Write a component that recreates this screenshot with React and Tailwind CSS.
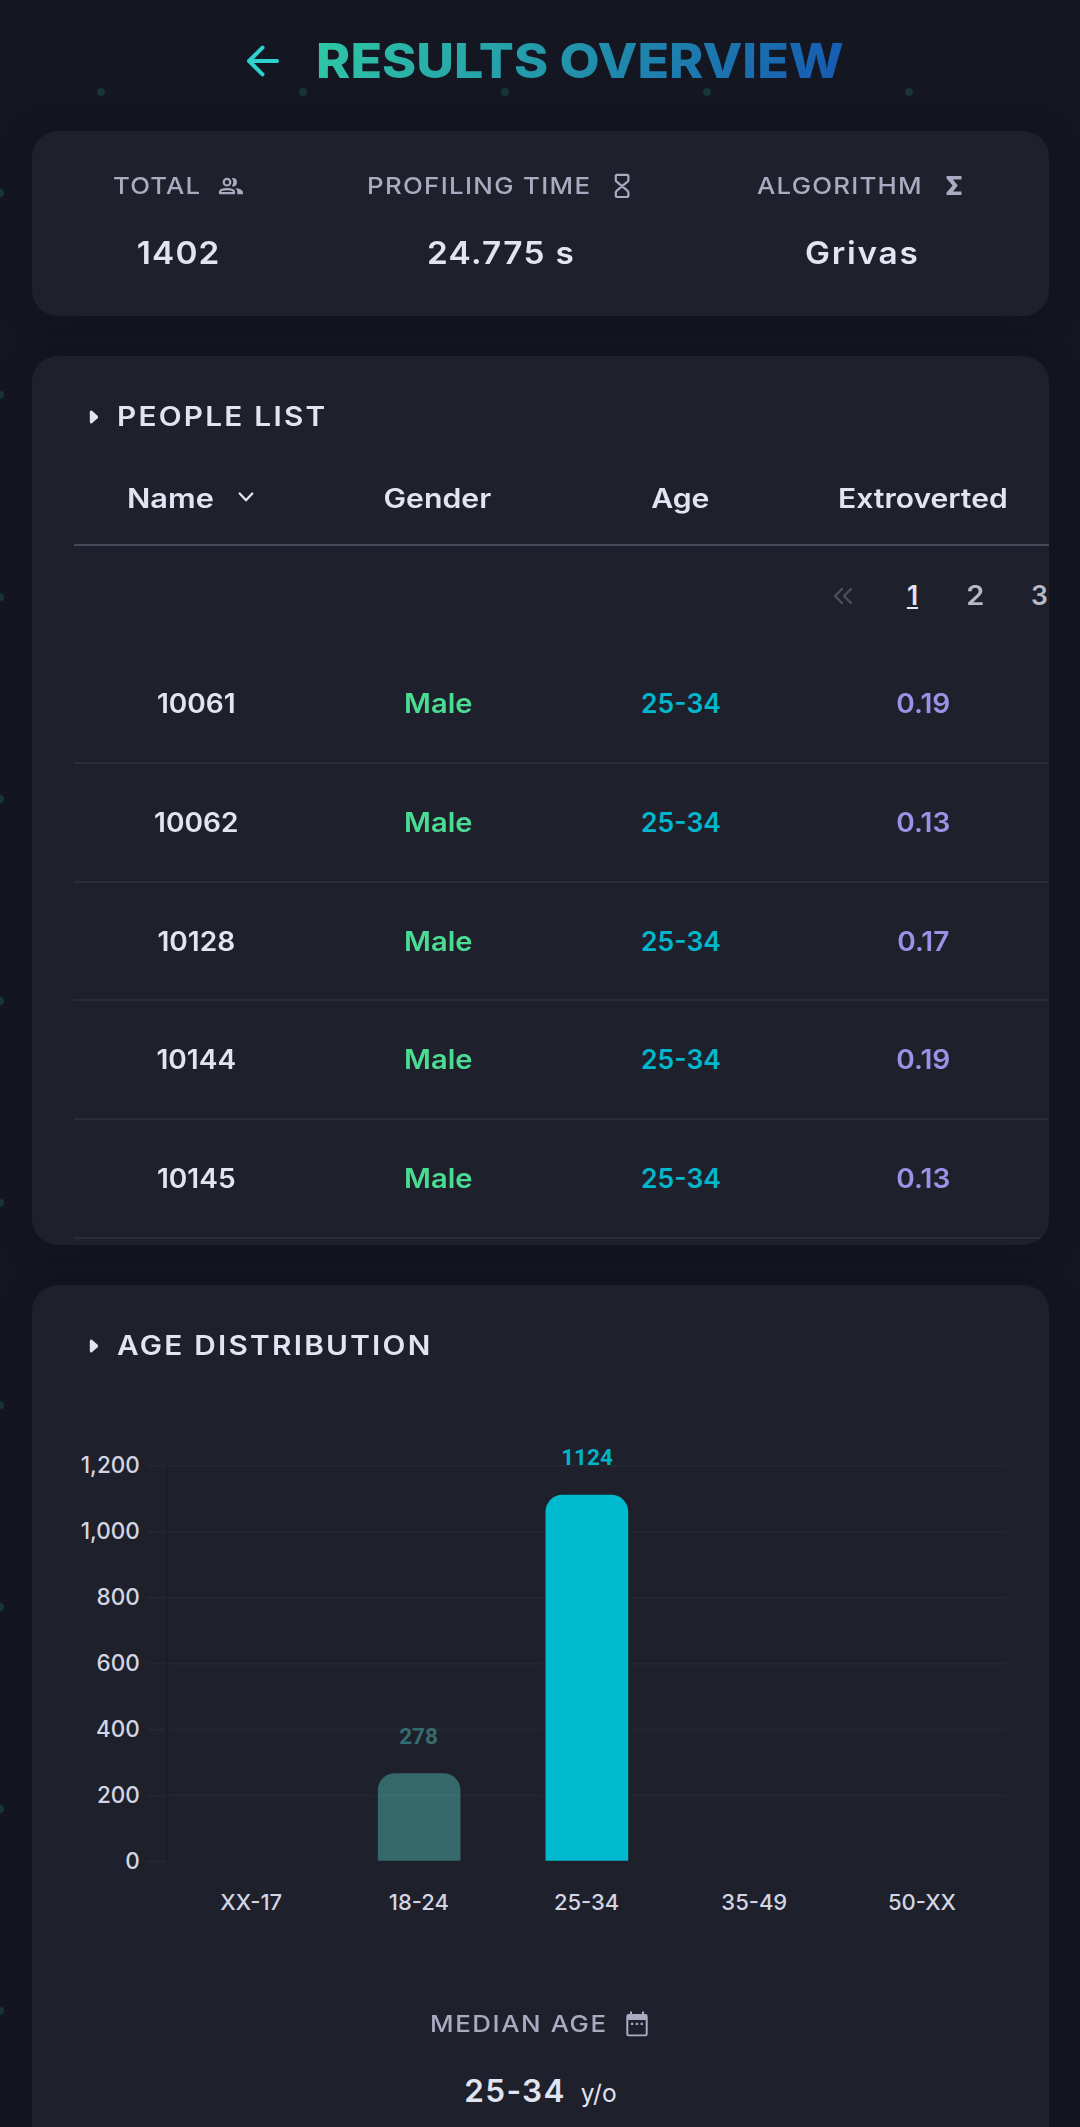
import React from "react";

const people = [
  { name: "10061", gender: "Male", age: "25-34", extroverted: "0.19" },
  { name: "10062", gender: "Male", age: "25-34", extroverted: "0.13" },
  { name: "10128", gender: "Male", age: "25-34", extroverted: "0.17" },
  { name: "10144", gender: "Male", age: "25-34", extroverted: "0.19" },
  { name: "10145", gender: "Male", age: "25-34", extroverted: "0.13" },
];

const yTicks = ["0", "200", "400", "600", "800", "1,000", "1,200"];
const xTicks = ["XX-17", "18-24", "25-34", "35-49", "50-XX"];

function ArrowLeft() {
  return (
    <svg className="h-[34px] w-[36px]" viewBox="0 0 36 34" fill="none" stroke="#2dd2d0" strokeWidth="4" strokeLinecap="round" strokeLinejoin="round">
      <path d="M32 17H4M17.5 3.7 4 17l13.500 13.300" />
    </svg>
  );
}

function People() {
  return (
    <svg className="h-[26px] w-[26px]" viewBox="0 0 26 26" fill="currentColor">
      <circle cx="9" cy="9.200" r="3.300" fill="none" stroke="currentColor" strokeWidth="2.200" />
      <path d="M2 20.200V18.800Q2.400 16.200 9 16.200T16 18.800V20.200Z" fill="none" stroke="currentColor" strokeWidth="2.200" strokeLinejoin="round" />
      <path d="M13.800 5.100Q18.800 4.400 19 9.200 18.800 14 13.800 13.300 16.800 9.200 13.800 5.100Z" />
      <path d="M18.300 15.200Q24.600 16.200 24.900 18.900V21.300H19.300V18.900Q19.300 16.600 17.300 15.200Z" />
    </svg>
  );
}

function Hourglass() {
  return (
    <svg className="h-[26px] w-[16px]" viewBox="0 0 16 26" fill="none" stroke="currentColor" strokeWidth="2.200" strokeLinejoin="round">
      <path d="M3 1.900h10q1.400 0 1.400 1.400V7q0 1-.8 1.700L3.100 17.300q-1.300 1-1.300 2.200v3.200Q1.800 24 3.200 24h9.700q1.500 0 1.500-1.400V19.500q0-1.200-1.300-2.200L2.600 8.700Q1.800 8 1.800 7V3.300Q1.800 1.900 3 1.900Z" />
    </svg>
  );
}

function Sigma() {
  return (
    <svg className="h-[19px] w-[16px]" viewBox="0 0 16 19" fill="currentColor">
      <path d="M.500 0H15.500V3.500H7L11.800 9.500 7 15.500H15.500V19H.500V16.400L6.600 9.500.500 2.600Z" />
    </svg>
  );
}

function Calendar() {
  return (
    <svg className="h-[26px] w-[22px]" viewBox="0 0 22 26" fill="currentColor">
      <path fillRule="evenodd" d="M4 .500h2V3h10V.500h2V3h1.500Q21.700 3 21.700 5.200V23q0 2.300-2.200 2.300h-17Q.300 25.300.300 23V5.200Q.300 3 2.500 3H4ZM2.300 9v13.800q0 .6.600.6h16.200q.600 0 .6-.6V9Z" />
      <path d="M5 11.800h2.300v2.300H5zM9.800 11.800h2.300v2.300H9.800zM14.600 11.800h2.300v2.300h-2.300z" />
    </svg>
  );
}

function Chevron() {
  return (
    <svg className="h-[12px] w-[16px] -translate-y-[1.500px]" viewBox="0 0 16 12" fill="none" stroke="currentColor" strokeWidth="2.300" strokeLinecap="round" strokeLinejoin="round">
      <path d="M1.700 2 8 8.800 14.300 2" />
    </svg>
  );
}

function DoubleChevron() {
  return (
    <svg className="h-[18px] w-[20px] text-[#4d4f5c]" viewBox="0 0 20 18" fill="none" stroke="currentColor" strokeWidth="2.400" strokeLinecap="round" strokeLinejoin="round">
      <path d="M9 2 2 9l7 7M18 2l-7 7 7 7" />
    </svg>
  );
}

function Card({ className, children }) {
  return (
    <section className={"overflow-hidden rounded-[26px] bg-[#1e202b] shadow-[0_4px_34px_rgba(10,10,18,0.3)] " + className}>
      {children}
    </section>
  );
}

function CardTitle({ children }) {
  return (
    <h2 className="flex h-[41px] items-center pl-[57px] text-[26.5px] font-semibold">
      <svg className="mr-[18px] h-[14px] w-[10px]" viewBox="0 0 10 14" fill="currentColor">
        <path d="M.800 2.200Q.800 0 3 .700L8.600 5.700Q9.700 7 8.600 8.300L3 13.300Q.800 14 .800 11.800Z" />
      </svg>
      <span className="inline-block origin-left scale-x-[1.123] whitespace-nowrap tracking-[2px]">{children}</span>
    </h2>
  );
}

function Stat({ label, labelClass, icon, value, valueClass }) {
  return (
    <div className="flex flex-col items-center">
      <div className="flex h-[34px] items-center text-[23.5px] font-medium text-[#a9abc0]">
        <span className={"inline-block whitespace-nowrap " + labelClass}>
          <span className="inline-block origin-left scale-x-110">{label}</span>
        </span>
        {icon}
      </div>
      <div className={"mt-[30px] h-[40px] text-[31.5px] leading-[40px] font-semibold whitespace-nowrap " + valueClass}>{value}</div>
    </div>
  );
}

function AgeChart() {
  return (
    <svg className="block h-[600px] w-[1017px]" viewBox="31.5 1366.5 1017 600" fontFamily="Inter, sans-serif">
      {yTicks.map((t, i) => {
        const y = 1861 - i * 65.95;
        return (
          <g key={t}>
            <path d={`M146.500 ${y}H165`} stroke="#252732" strokeWidth="2" />
            <path d={`M168 ${y}H1005.500`} stroke={i === 0 ? "#21232e" : "#252732"} strokeWidth="2" />
            <text x="139.300" y={y + 7} textAnchor="end" fontSize="22.500" fontWeight="500" fill="#d3d5e2">{t}</text>
          </g>
        );
      })}
      <path d="M166.500 1464V1863" stroke="#1b1c27" strokeWidth="2" />
      <path d="M377.300 1860.300V1789.700A17 17 0 0 1 394.300 1772.700H443A17 17 0 0 1 460 1789.700V1860.300Z" fill="#35686b" stroke="#1e202b" strokeWidth="6" paintOrder="stroke" />
      <path d="M378.500 1795H459" stroke="#3c6e71" strokeWidth="2" />
      <path d="M545 1860.300V1511.300A17 17 0 0 1 562 1494.300H610.700A17 17 0 0 1 627.700 1511.300V1860.300Z" fill="#00bacf" stroke="#1e202b" strokeWidth="6" paintOrder="stroke" />
      <g fontFamily="Roboto, sans-serif" fontWeight="700" fontSize="22.500" textAnchor="middle">
        <text x="418" y="1743.500" fill="#356c70">278</text>
        <text x="586.500" y="1464.300" fill="#00b4c8">1124</text>
      </g>
      <g fontSize="22" fontWeight="500" fill="#d3d5e2" textAnchor="middle">
        {xTicks.map((t, i) => (
          <text key={t} x={250.7 + i * 167.7} y="1909.500">{t}</text>
        ))}
      </g>
    </svg>
  );
}

export default function App() {
  return (
    <main className="h-[2127px] w-[1080px] overflow-hidden bg-[#141722] bg-[radial-gradient(circle_at_center,#18353a_3.500px,transparent_4.500px),radial-gradient(circle_at_center,#18353a_3.500px,transparent_4.500px)] bg-[size:202px_202px] bg-[position:0_-9px,-101px_92px] px-[31.5px] font-['Inter',sans-serif] text-[#e2e4f1]">
      <header className="flex h-[131px] items-center pb-[9px] pl-[213px]">
        <ArrowLeft />
        <h1 className="ml-[35px] inline-block origin-left scale-x-[1.093] bg-[linear-gradient(120deg,#2fc9a5,#1558b2)] bg-clip-text text-[47.5px] leading-[60px] font-extrabold whitespace-nowrap text-transparent">
          RESULTS OVERVIEW
        </h1>
      </header>

      <Card className="grid h-[185px] grid-cols-[293px_348.5px_373px] pt-[37.5px]">
        <Stat
          label="TOTAL"
          labelClass="w-[105px] tracking-[1px]"
          icon={<People />}
          value="1402"
          valueClass="scale-x-106 tracking-[1.1px] pl-[2px]"
        />
        <Stat
          label="PROFILING TIME"
          labelClass="w-[247px] tracking-[1.2px]"
          icon={<Hourglass />}
          value="24.775 s"
          valueClass="scale-x-106 tracking-[1.2px] pl-[5px]"
        />
        <Stat
          label="ALGORITHM"
          labelClass="w-[189px] tracking-[1.1px]"
          icon={<Sigma />}
          value="Grivas"
          valueClass="scale-x-106 tracking-[1.65px] pl-[6px]"
        />
      </Card>

      <Card className="mt-[40px] h-[889px] pt-[40.5px]">
        <CardTitle>PEOPLE LIST</CardTitle>
        <div className="mt-[16.500px] ml-[42px] w-[975px]">
          <div className="grid h-[92px] grid-cols-[repeat(4,242.6px)] items-center border-b-2 border-[#474859] text-center text-[26.5px] font-semibold">
            <div className="flex items-center pl-[53px]">
              <span className="inline-block w-[111px] text-left">
                <span className="inline-block origin-left scale-x-116">Name</span>
              </span>
              <Chevron />
            </div>
            <div className="scale-x-114">Gender</div>
            <div className="scale-x-114">Age</div>
            <div className="scale-x-[1.135] pl-[1px]">Extroverted</div>
          </div>
          <nav className="ml-[734px] flex h-[99px] items-center pt-[1px] text-[26.5px] font-semibold text-[#b7b9c6]">
            <span className="flex w-[70px] shrink-0 justify-center"><DoubleChevron /></span>
            <span className="w-[70px] shrink-0 text-center text-[#e2e4f1] underline decoration-2 underline-offset-2">1</span>
            <span className="w-[54.500px] shrink-0 scale-x-110 text-center">2</span>
            <span className="w-[75px] shrink-0 text-center">3</span>
          </nav>
          {people.map((p) => (
            <div key={p.name} className="grid h-[118.750px] grid-cols-[repeat(4,242.6px)] items-center border-b-2 border-[#2a2c3a] pt-[1px] pl-[1px] text-center text-[26.5px] font-semibold">
              <div className="scale-x-106">{p.name}</div>
              <div className="scale-x-110 text-[#4bdc93]">{p.gender}</div>
              <div className="text-[#00b8cd]">{p.age}</div>
              <div className="scale-x-106 text-[#9a92e6]">{p.extroverted}</div>
            </div>
          ))}
        </div>
      </Card>

      <Card className="mt-[40px] h-[960px] pt-[40.5px]">
        <CardTitle>AGE DISTRIBUTION</CardTitle>
        <AgeChart />
        <div className="mt-[40px] flex flex-col items-center">
          <div className="-ml-[2px] flex h-[34px] items-center text-[23.5px] font-medium text-[#a9abc0]">
            <span className="inline-block w-[196px] whitespace-nowrap">
              <span className="inline-block origin-left scale-x-110 tracking-[1.43px]">MEDIAN AGE</span>
            </span>
            <Calendar />
          </div>
          <div className="mt-[30px] flex h-[40px] items-baseline pl-[1px] leading-[40px]">
            <span className="text-[31.5px] font-semibold tracking-[1.3px]">25-34</span>
            <span className="ml-[15px] text-[24.5px]">y/o</span>
          </div>
        </div>
      </Card>
    </main>
  );
}
